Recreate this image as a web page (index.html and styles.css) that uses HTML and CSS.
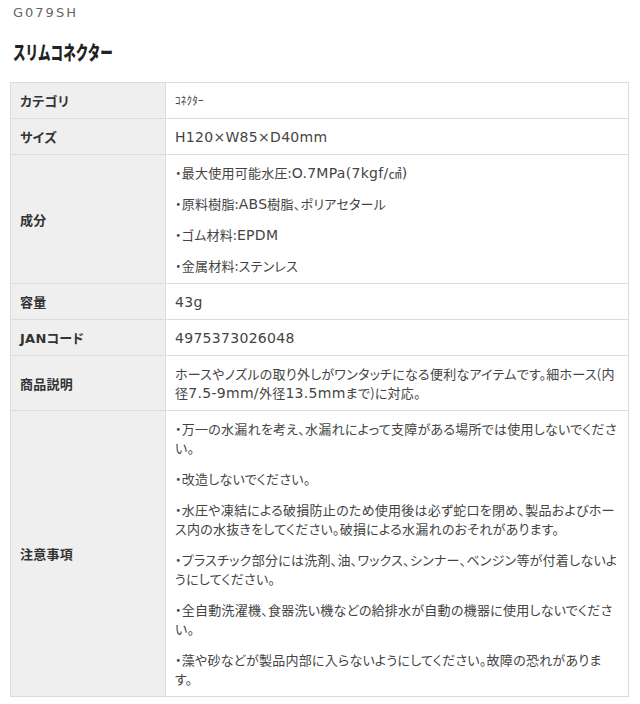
FILE: index.html
```html
<!DOCTYPE html>
<html lang="ja">
  <head>
    <meta charset="UTF-8" />
    <meta name="viewport" content="width=device-width, initial-scale=1" />
    <title>G079SH スリムコネクター</title>
    <link rel="stylesheet" href="styles.css">
  </head>
  <body>
    <main class="product">
      <p class="product-code">G079SH</p>
      <h1 class="product-name"><span>スリムコネクター</span></h1>

      <table class="spec">
        <tbody>
          <tr>
            <th scope="row">カテゴリ</th>
            <td class="small-kana">ｺﾈｸﾀｰ</td>
          </tr>
          <tr>
            <th scope="row">サイズ</th>
            <td><span class="en">H120×W85×D40mm</span></td>
          </tr>
          <tr>
            <th scope="row">成分</th>
            <td>
              <p>・最大使用可能水圧:<span class="en">O.7MPa(7kgf/</span>㎠<span class="en">)</span></p>
              <p>・原料樹脂:<span class="en">ABS</span>樹脂、ポリアセタール</p>
              <p>・ゴム材料:<span class="en">EPDM</span></p>
              <p>・金属材料:ステンレス</p>
            </td>
          </tr>
          <tr>
            <th scope="row">容量</th>
            <td><span class="en">43g</span></td>
          </tr>
          <tr>
            <th scope="row"><span class="en-label">JAN</span>コード</th>
            <td><span class="en">4975373026048</span></td>
          </tr>
          <tr>
            <th scope="row">商品説明</th>
            <td>
              <p>ホースやノズルの取り外しがワンタッチになる便利なアイテムです。細ホース(内径<span class="en">7.5-9mm/</span>外径<span class="en">13.5mm</span>まで)に対応。</p>
            </td>
          </tr>
          <tr>
            <th scope="row">注意事項</th>
            <td>
              <p>・万一の水漏れを考え、水漏れによって支障がある場所では使用しないでください。</p>
              <p>・改造しないでください。</p>
              <p>・水圧や凍結による破損防止のため使用後は必ず蛇口を閉め、製品およびホース内の水抜きをしてください。破損による水漏れのおそれがあります。</p>
              <p>・プラスチック部分には洗剤、油、ワックス、シンナー、ベンジン等が付着しないようにしてください。</p>
              <p>・全自動洗濯機、食器洗い機などの給排水が自動の機器に使用しないでください。</p>
              <p>・藻や砂などが製品内部に入らないようにしてください。故障の恐れがあります。</p>
            </td>
          </tr>
        </tbody>
      </table>
    </main>
  </body>
</html>
```

FILE: styles.css
```css
/* Reset */
* {
  margin: 0;
  padding: 0;
  box-sizing: border-box;
}

body {
  font-family: "Noto Sans CJK JP", "Noto Sans", sans-serif;
  background: #fff;
  color: #333;
}

.product {
  padding: 5px 11px 10px 10px;
}

.product-code {
  font-family: "DejaVu Sans", "Noto Sans", sans-serif;
  font-size: 13px;
  line-height: 16px;
  letter-spacing: 2px;
  color: #666;
  padding-left: 3px;
}

.product-name {
  margin-top: 19px;
  height: 24px;
  line-height: 24px;
  font-size: 19px;
  font-weight: 900;
  color: #222;
  padding-left: 3px;
}

.product-name span {
  display: inline-block;
  transform: scaleX(0.66);
  transform-origin: left center;
  white-space: nowrap;
}

.spec {
  margin-top: 18px;
  width: 100%;
  border-collapse: collapse;
  font-size: 13px;
  line-height: 19px;
  letter-spacing: 0.25px;
  font-feature-settings: "palt";
}

.spec th,
.spec td {
  border: 1px solid #dcdcdc;
  padding: 8px 10px 8px 9px;
  vertical-align: middle;
  text-align: left;
}

.spec th {
  width: 155px;
  background: #efefef;
  font-weight: 700;
  color: #333;
}

.spec td {
  color: #444;
}

.spec td p {
  line-height: 19px;
}

.spec td p + p {
  margin-top: 12px;
}

.spec td.small-kana {
  font-size: 11px;
}

/* wide latin like the original system font */
.spec .en {
  font-family: "DejaVu Sans", sans-serif;
  font-size: 14px;
  line-height: 0;
  letter-spacing: 0.3px;
}

.spec .en-label {
  font-family: "DejaVu Sans", sans-serif;
  font-size: 13px;
  line-height: 0;
}
```
